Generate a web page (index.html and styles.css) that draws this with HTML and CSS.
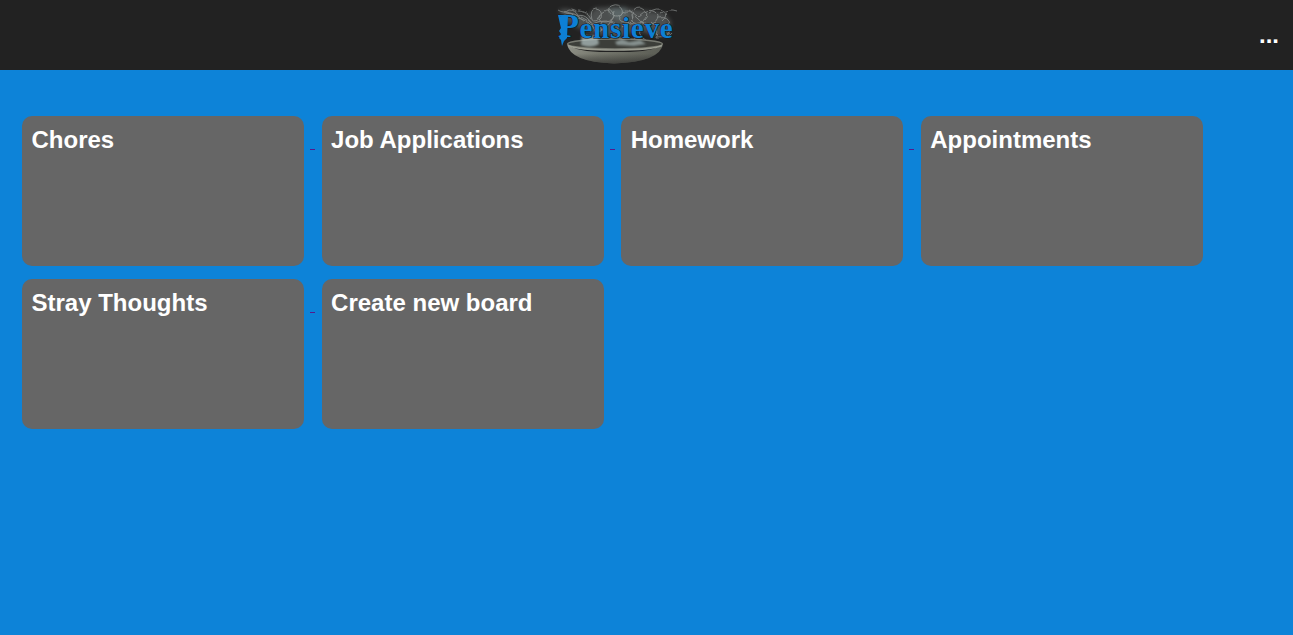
FILE: index.html
```html
<!DOCTYPE html>
<html lang="en">
<head>
<meta charset="utf-8">
<title>Pensieve</title>
<link rel="stylesheet" href="styles.css">
</head>
<body>
<header class="topbar">
  <svg class="logo" viewBox="0 0 136 70" role="img" aria-label="Pensieve">
    <defs>
      <linearGradient id="bowl" x1="0" x2="1" y1="0" y2="0.3">
        <stop offset="0" stop-color="#94968c"/><stop offset=".45" stop-color="#74766c"/><stop offset="1" stop-color="#5c5e56"/>
      </linearGradient>
      <linearGradient id="shade" x1="0" x2="0" y1="0" y2="1">
        <stop offset=".5" stop-color="#222" stop-opacity="0"/><stop offset="1" stop-color="#222" stop-opacity=".55"/>
      </linearGradient>
      <filter id="mist" x="-20%" y="-20%" width="140%" height="140%"><feGaussianBlur stdDeviation="2"/></filter>
      <filter id="wisp" x="-10%" y="-10%" width="120%" height="120%">
        <feTurbulence type="fractalNoise" baseFrequency=".07" numOctaves="1" seed="4" result="n"/>
        <feDisplacementMap in="SourceGraphic" in2="n" scale="6" xChannelSelector="R" yChannelSelector="G"/>
        <feGaussianBlur stdDeviation=".45"/>
      </filter>
      <filter id="soft"><feGaussianBlur stdDeviation=".8"/></filter>
    </defs>
    <g filter="url(#mist)" fill="#899090">
      <path d="M9 10Q18 7 27 13L36 18L45 8L65 7L91 10L114 13L121 22L118 37L103 35L88 30L68 38L45 34L31 29L16 22Z" opacity=".4"/>
      <path d="M60 8L76 7L79 17L69 21L61 16Z" fill="#708a8d" opacity=".4"/>
    </g>
    <g class="smoke" filter="url(#wisp)">
      <path d="M8 10q6 4 11 0q7 0 9 6q6-2 10 3q4 4 8 10M12 16q9-6 17 1q7 4 12 14M27 11q10 0 14 8M14 12q8 0 12 6q8 0 15 8"/>
      <path d="M42 20q-3-11 5-12q7 1 5 9q-5 6-10 3M48 18q10-14 15-4q1 7-7 8q-9 0-5-8M58 9q8-6 13-1q4 6-3 9q-8 1-10-8"/>
      <path d="M69 18q7-12 13-4q3 9-7 9q-8 0-6-5M83 20q-2-13 8-12q10 5 3 12q-8 5-11 0M89 16q9-9 17-4q6 4 0 11q-8 5-14-2"/>
      <path d="M99 13q9-7 15-2q4 5-2 10M111 13q8-5 16-2M109 18q10-2 11 7q1 8-5 12M43 24q15-7 23 2q7 9 2 17M72 27q11-9 20 0q-7 8 5 15M101 23q8 5 5 15q12 0 15-5"/>
      <path d="M31 17q13 5 16 20M87 24q-7 7-2 16M53 22q-4 5 2 11M64 12q-1 12-15 20M78 10q15 8 20 21"/>
    </g>
    <path d="M17 44Q20 62 64 63.500Q110 62 113 44Q103 53 64 52Q27 53 17 44Z" fill="url(#bowl)"/>
    <path d="M17 44Q20 62 64 63.500Q110 62 113 44Q103 53 64 52Q27 53 17 44Z" fill="url(#shade)"/>
    <ellipse cx="65" cy="44" rx="47.500" ry="5" fill="#3c3e39" stroke="#777970" stroke-width="1.500"/>
    <path d="M18 45.500Q28 50 65 50Q102 50 112 45.500" fill="none" stroke="#9b9d92" stroke-width="1.500"/>
    <g filter="url(#soft)" fill="#b5c6c6">
      <path d="M32 34L39 36L47 35L49 44Q41 49 31 45Z" opacity=".7"/>
      <path d="M65 42l7-3 7 3 11-2 6 4-12 2-17-1Z" opacity=".6"/>
    </g>
    <g class="wordmark">
      <text class="initial" x="8" y="37" textLength="21" lengthAdjust="spacingAndGlyphs">P</text>
      <text class="rest" x="29.500" y="38" textLength="93" lengthAdjust="spacing">ensieve</text>
      <path class="spike" d="M8 15l4 2 6-1-1 22-3 3-2 5-1-6-2-2 2-4-2-3 2-3-1-4Z"/>
    </g>
  </svg>
  <div class="menu">...</div>
</header>
<main class="boards">
  <div class="tile"><section class="card"><h2>Chores</h2></section><a class="link"></a></div>
  <div class="tile"><section class="card"><h2>Job Applications</h2></section><a class="link"></a></div>
  <div class="tile"><section class="card"><h2>Homework</h2></section><a class="link"></a></div>
  <div class="tile"><section class="card"><h2>Appointments</h2></section></div>
  <div class="tile"><section class="card"><h2>Stray Thoughts</h2></section><a class="link"></a></div>
  <div class="tile"><section class="card"><h2>Create new board</h2></section></div>
</main>
</body>
</html>
```
FILE: styles.css
```css
body {
  margin: 0;
  min-height: 635px;
  background: #0d83d8;
  font-family: "Liberation Sans", Arial, sans-serif;
}

.topbar {
  box-sizing: border-box;
  display: flex;
  justify-content: space-between;
  height: 70px;
  padding: 0 14px 0 550px;
  background: #222;
}

.logo {
  width: 136px;
  height: 70px;
}

.smoke {
  fill: none;
  stroke: #b4bab8;
  stroke-width: 0.9;
  opacity: 0.55;
}

.wordmark {
  fill: #0d7fd5;
  stroke: #101a22;
  stroke-width: 1.2;
  paint-order: stroke;
  font-family: "Liberation Serif", serif;
  font-weight: bold;
}

.initial {
  font-size: 33px;
}

.rest {
  font-size: 29px;
}

.spike {
  stroke: none;
}

.menu {
  padding-top: 21px;
  color: #fff;
  font-size: 24px;
  font-weight: bold;
  line-height: 27px;
}

.boards {
  display: grid;
  grid-template-columns: repeat(4, 299.6px);
  row-gap: 13.5px;
  padding: 46px 0 0 22px;
}

.tile {
  display: flex;
}

.card {
  box-sizing: border-box;
  width: 282px;
  height: 149.8px;
  padding: 10px 9.5px;
  border-radius: 10px;
  background: #666;
}

.card h2 {
  margin: 0;
  color: #fff;
  font-size: 24px;
  line-height: 28px;
}

.link {
  width: 5px;
  height: 1px;
  margin: 33px 0 0 6px;
  background: #551a8b;
}
```
